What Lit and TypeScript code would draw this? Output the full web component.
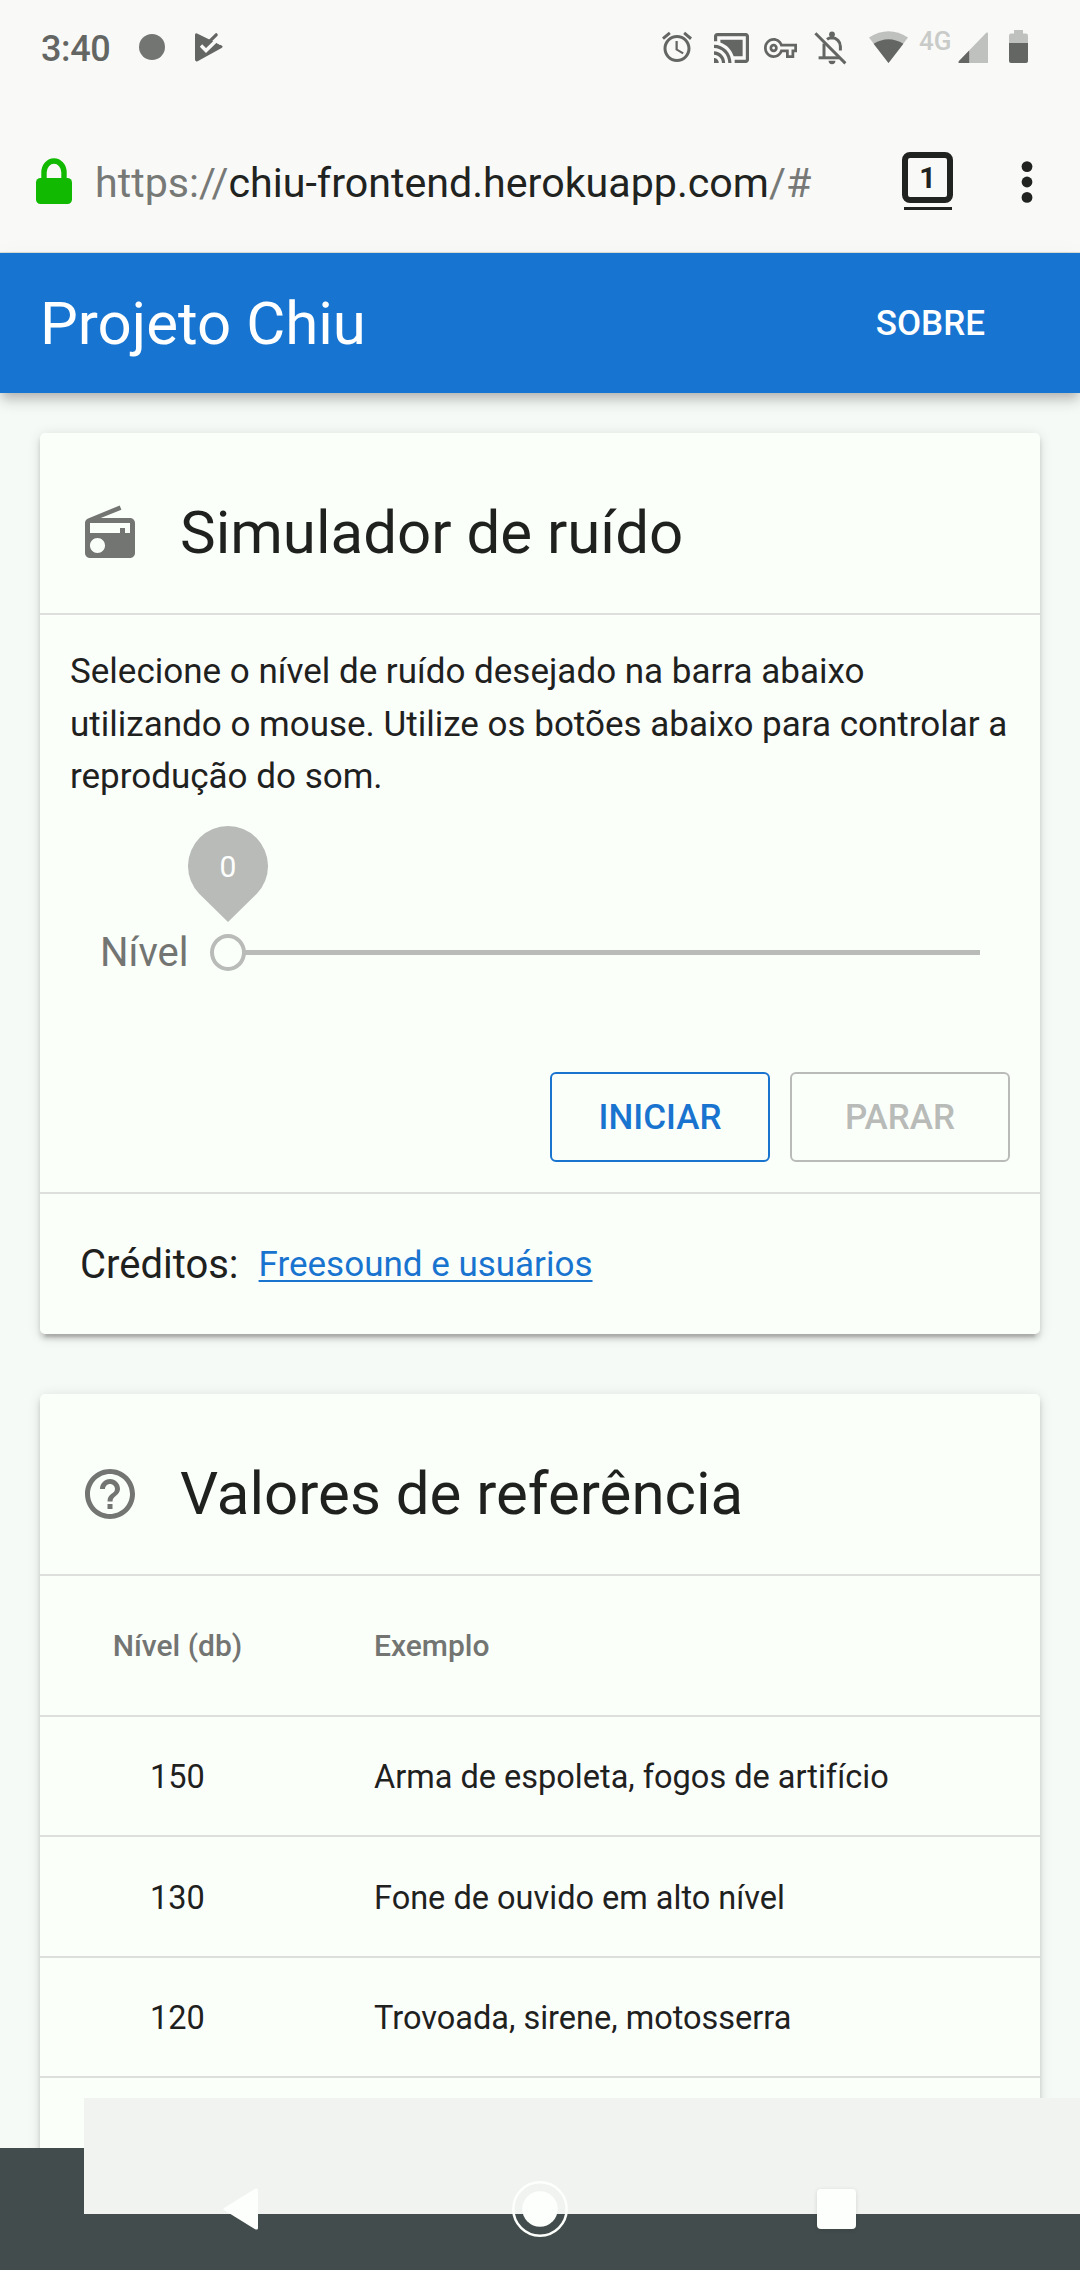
import { LitElement, html, css, svg } from "lit";
import { customElement, property } from "lit/decorators.js";

const ICONS: Record<string, { box: string; body: unknown }> = {
  playCheck: {
    box: "0 0 28 29",
    body: svg`<path d="M0 2Q0-.6 2.6.8L26.6 12.6Q28.6 13.8 26.6 15L2.6 28.2Q0 29 0 26.6z"/>
      <path d="M6 12.5L11 17.5L25.5 3.5" fill="none" stroke="#f9faf8" stroke-width="3.4"/>
      <path d="M11 11.8L21.2 1.8" fill="none" stroke="currentColor" stroke-width="3.2" stroke-linecap="round"/>
      <path d="M22 10L25 7V12z" fill="#f9faf8"/>`,
  },
  alarm: {
    box: "0 0 24 24",
    body: svg`<path d="M22 5.72l-4.6-3.86-1.29 1.53 4.6 3.86L22 5.72zM7.88 3.39L6.6 1.86 2 5.71l1.29 1.53 4.59-3.85zM12.5 8H11v6l4.75 2.85.75-1.23-4-2.37V8zM12 4c-4.97 0-9 4.03-9 9s4.02 9 9 9c4.97 0 9-4.03 9-9s-4.03-9-9-9zm0 16c-3.87 0-7-3.13-7-7s3.13-7 7-7 7 3.13 7 7-3.13 7-7 7z"/>`,
  },
  cast: {
    box: "1 3 22 18",
    body: svg`<path d="M1 18v3h3c0-1.66-1.34-3-3-3zm0-4v2c2.76 0 5 2.24 5 5h2c0-3.87-3.13-7-7-7zm18-7H5v1.63c3.96 1.28 7.09 4.41 8.37 8.37H19V7zM1 10v2c4.97 0 9 4.03 9 9h2c0-6.08-4.93-11-11-11zm20-7H3c-1.1 0-2 .9-2 2v3h2V5h18v14h-7v2h7c1.1 0 2-.9 2-2V5c0-1.1-.9-2-2-2z"/>`,
  },
  key: {
    box: "0 5 24 14",
    body: svg`<path d="M22 19h-6v-4h-2.68c-1.14 2.42-3.6 4-6.32 4-3.86 0-7-3.14-7-7s3.14-7 7-7c2.72 0 5.17 1.58 6.32 4H24v6h-2v4zm-4-2h2v-4h2v-2H11.94l-.23-.67C11.01 8.34 9.11 7 7 7c-2.76 0-5 2.24-5 5s2.24 5 5 5c2.11 0 4.01-1.34 4.71-3.33l.23-.67H18v4zM7 15c-1.65 0-3-1.35-3-3s1.35-3 3-3 3 1.35 3 3-1.35 3-3 3zm0-4c-.55 0-1 .45-1 1s.45 1 1 1 1-.45 1-1-.45-1-1-1z"/>`,
  },
  bellOff: {
    box: "0 0 34 35",
    body: svg`<g fill="none" stroke="currentColor" stroke-width="3">
      <path d="M2.4 3.2L32.4 33.4"/><path d="M11 13.5V27.6"/><path d="M5.6 27.8H26.5"/>
      <path d="M14 9.4Q16 7.8 19 7.8A8.6 8.6 0 0 1 27.4 16.4V20.6"/></g>
      <circle cx="19" cy="4.4" r="2.9"/><path d="M15.6 30.8h6.8a3.4 3.4 0 0 1-6.8 0z"/>`,
  },
  wifi: {
    box: "0 0 39 32",
    body: svg`<path d="M0 6.6Q19.5-6 39 6.6L19.5 32z" fill="#bfc1bf"/><path d="M4.6 12.8Q19.5 3.6 34.4 12.8L19.5 32z"/>`,
  },
  signal: {
    box: "0 0 30 31",
    body: svg`<path d="M28.5.5Q30 0 30 1.5V31H2Q-.5 31 1 29z" fill="#bfc1bf"/><path d="M11.2 18.6V31H2Q-.5 31 1 29z"/>`,
  },
  battery: {
    box: "0 0 19 33",
    body: svg`<path d="M0 13V6Q0 3.6 2 3.6H5V0H14V3.6H17Q19 3.6 19 6V13z" fill="#bfc1bf"/><path d="M0 13H19V31Q19 33 17 33H2Q0 33 0 31z"/>`,
  },
  lock: {
    box: "0 0 36 46",
    body: svg`<path d="M8 24V14.5a10 11.5 0 0 1 20 0V24" fill="none" stroke="currentColor" stroke-width="5.4"/><rect y="20" width="36" height="26" rx="4.5"/>`,
  },
  more: {
    box: "0 0 12 42",
    body: svg`<circle cx="6" cy="5.6" r="5.4"/><circle cx="6" cy="21" r="5.4"/><circle cx="6" cy="36.4" r="5.4"/>`,
  },
  radio: {
    box: "0 0 24 24",
    body: svg`<path d="M3.24 6.15C2.51 6.43 2 7.17 2 8v12c0 1.1.89 2 2 2h16c1.11 0 2-.9 2-2V8c0-1.11-.89-2-2-2H8.3l8.26-3.34L15.88 1 3.24 6.15zM7 20c-1.66 0-3-1.34-3-3s1.34-3 3-3 3 1.34 3 3-1.34 3-3 3zm13-8h-2v-2h-2v2H4V8h16v4z"/>`,
  },
  help: {
    box: "0 0 24 24",
    body: svg`<path d="M11 18h2v-2h-2v2zm1-16C6.48 2 2 6.48 2 12s4.48 10 10 10 10-4.48 10-10S17.52 2 12 2zm0 18c-4.41 0-8-3.59-8-8s3.59-8 8-8 8 3.59 8 8-3.59 8-8 8zm0-14c-2.21 0-4 1.79-4 4h2c0-1.1.9-2 2-2s2 .9 2 2c0 2-3 1.75-3 5h2c0-2.25 3-2.5 3-5 0-2.21-1.79-4-4-4z"/>`,
  },
  back: { box: "0 0 36 42", body: svg`<path d="M1 20Q0 21 1 22L33 41.2Q36 42.4 36 40V2Q36-.4 33 .8z"/>` },
  home: {
    box: "0 0 60 60",
    body: svg`<circle cx="30" cy="30" r="27.6" fill="none" stroke="currentColor" stroke-width="2.6"/><circle cx="30" cy="30" r="18.4"/>`,
  },
  recents: { box: "0 0 39 40", body: svg`<rect width="39" height="40" rx="4"/>` },
};

@customElement("ui-icon")
export class UiIcon extends LitElement {
  @property() name = "";
  static styles = css`
    :host { display: block; flex: none; }
    svg { display: block; width: 100%; height: 100%; overflow: visible; fill: currentColor; }
  `;
  render() {
    const icon = ICONS[this.name];
    return icon ? html`<svg viewBox=${icon.box} preserveAspectRatio="none">${icon.body}</svg>` : null;
  }
}

@customElement("status-bar")
export class StatusBar extends LitElement {
  static styles = css`
    :host { display: flex; align-items: flex-start; height: 96px; box-sizing: border-box; padding: 30px 52px 0 41px; color: #646664; }
    .time { font-size: 36px; font-weight: 500; line-height: 42px; margin-top: -2px; letter-spacing: -0.4px; width: 98px; }
    .dot { width: 26px; height: 26px; border-radius: 50%; background: #737573; margin-top: 4px; }
    .play { width: 28px; height: 29px; margin: 3px 0 0 30px; }
    .spacer { flex: 1; }
    .alarm { width: 36px; height: 36px; margin-top: -1px; }
    .cast { width: 35px; height: 30px; margin: 3px 0 0 19px; }
    .key { width: 33px; height: 20px; margin: 8px 0 0 15px; }
    .bell { width: 34px; height: 35px; margin-left: 16px; }
    .wifi { width: 39px; height: 32px; margin: 1px 0 0 22px; }
    .net { width: 39px; margin-left: 11px; font-size: 26px; font-weight: 500; line-height: 22px; color: #c9cbc9; }
    .signal { width: 30px; height: 31px; margin-top: 2px; }
    .battery { width: 19px; height: 33px; margin-left: 21px; }
  `;
  render() {
    return html`
      <span class="time">3:40</span><span class="dot"></span>
      <ui-icon class="play" name="playCheck"></ui-icon>
      <span class="spacer"></span>
      <ui-icon class="alarm" name="alarm"></ui-icon>
      <ui-icon class="cast" name="cast"></ui-icon>
      <ui-icon class="key" name="key"></ui-icon>
      <ui-icon class="bell" name="bellOff"></ui-icon>
      <ui-icon class="wifi" name="wifi"></ui-icon>
      <span class="net">4G</span>
      <ui-icon class="signal" name="signal"></ui-icon>
      <ui-icon class="battery" name="battery"></ui-icon>
    `;
  }
}

@customElement("address-bar")
export class AddressBar extends LitElement {
  static styles = css`
    :host { display: flex; align-items: flex-start; height: 157px; box-sizing: border-box; padding: 56px 47px 0 36px;
      border-bottom: 1px solid #dcded8; color: #212321; }
    .lock { width: 36px; height: 46px; margin-top: 6px; color: #11b900; }
    .url { margin-left: 23px; font-size: 41.2px; line-height: 50px; margin-top: 6px; white-space: nowrap; flex: 1; color: #777977; }
    .host { color: #212321; }
    .tabs { display: flex; flex-direction: column; align-items: center; gap: 4px; margin-right: 68px; }
    .count { width: 51px; height: 51px; box-sizing: border-box; border: 6px solid #212321; border-radius: 8px;
      font-size: 29px; font-weight: 700; line-height: 41px; text-align: center; }
    .shelf { width: 48px; height: 3px; background: #212321; }
    .more { width: 12px; height: 42px; margin-top: 9px; }
  `;
  render() {
    return html`
      <ui-icon class="lock" name="lock"></ui-icon>
      <span class="url">https://<span class="host">chiu-frontend.herokuapp.com</span>/#</span>
      <span class="tabs"><span class="count">1</span><span class="shelf"></span></span>
      <ui-icon class="more" name="more"></ui-icon>
    `;
  }
}

@customElement("card-title")
export class CardTitle extends LitElement {
  @property() icon = "";
  @property() heading = "";
  static styles = css`
    :host { display: flex; align-items: center; gap: 40px; height: 180px; box-sizing: border-box; padding: 20px 40px 0; }
    .icon { width: 60px; height: 60px; color: #737573; }
    .heading { margin: 0; font-size: 60px; font-weight: 400; line-height: 80px; white-space: nowrap; }
  `;
  render() {
    return html`<ui-icon class="icon" name=${this.icon}></ui-icon><h2 class="heading">${this.heading}</h2>`;
  }
}

@customElement("level-slider")
export class LevelSlider extends LitElement {
  @property({ type: Number }) value = 0;
  static styles = css`
    :host { display: flex; align-items: center; height: 60px; padding: 0 60px; }
    .label { width: 128px; font-size: 40px; line-height: 58px; padding-top: 2px; color: #737573; }
    .track { position: relative; flex: 1; height: 5px; background: #b8bbb8; }
    .thumb { position: absolute; left: -18px; top: -16px; width: 36px; height: 37px; box-sizing: border-box;
      border: 4px solid #b8bbb8; border-radius: 50%; background: #fbfffa; }
    .pin { position: absolute; left: -40px; top: -124px; width: 80px; height: 96px; }
    .drop { display: block; width: 80px; height: 96px; fill: #b8bbb8; }
    .value { position: absolute; inset: 0 0 16px; font-size: 30px; line-height: 81px; text-align: center; color: #fff; }
  `;
  render() {
    return html`
      <span class="label">Nível</span>
      <div class="track">
        <span class="thumb"></span>
        <span class="pin">
          <svg class="drop" viewBox="0 0 80 96"><path d="M40 96L11.2 67.8A40 40 0 1 1 68.8 67.8z" /></svg>
          <span class="value">${this.value}</span>
        </span>
      </div>
    `;
  }
}

const CARD = css`
  .card { background: #fbfffa; border-radius: 5px;
    box-shadow: 0 2.5px 12.5px rgba(0, 0, 0, 0.12), 0 5px 5px rgba(0, 0, 0, 0.14), 0 7.5px 2.5px -5px rgba(0, 0, 0, 0.14); }
  .rule { height: 2px; background: #dddfdd; }
`;

@customElement("simulator-card")
export class SimulatorCard extends LitElement {
  static styles = [CARD, css`
    :host { display: block; }
    .card { height: 901px; }
    .text { margin: 0; padding: 31px 30px 0; height: 156px; font-size: 35px; line-height: 52.5px; white-space: pre-line; }
    .slider { margin-top: 120px; }
    .actions { display: flex; justify-content: flex-end; gap: 20px; padding: 90px 30px 30px; }
    .btn { width: 220px; height: 90px; box-sizing: border-box; padding: 1px 0 0; border: 2px solid currentColor; border-radius: 6px;
      background: none; font: 500 35px/85px Roboto, sans-serif; text-transform: uppercase; color: #1974d0; }
    .off { color: #b8bbb8; }
    .credits { display: flex; align-items: center; height: 140px; padding: 0 40px; font-size: 40px; }
    .link { margin-left: 20px; font-size: 35px; color: #1974d0; text-decoration: underline;
      text-decoration-thickness: 2px; text-underline-offset: 4px; text-decoration-skip-ink: none; }
  `];
  render() {
    return html`
      <section class="card">
        <card-title icon="radio" heading="Simulador de ruído"></card-title>
        <div class="rule"></div>
        <p class="text">Selecione o nível de ruído desejado na barra abaixo
utilizando o mouse. Utilize os botões abaixo para controlar a
reprodução do som.</p>
        <level-slider class="slider" .value=${0}></level-slider>
        <div class="actions">
          <button class="btn">Iniciar</button>
          <button class="btn off" disabled>Parar</button>
        </div>
        <div class="rule"></div>
        <div class="credits"><span>Créditos:</span><a class="link">Freesound e usuários</a></div>
      </section>
    `;
  }
}

const LEVELS = [
  { level: 150, example: "Arma de espoleta, fogos de artifício" },
  { level: 130, example: "Fone de ouvido em alto nível" },
  { level: 120, example: "Trovoada, sirene, motosserra" },
];

@customElement("reference-card")
export class ReferenceCard extends LitElement {
  static styles = [CARD, css`
    :host { display: block; }
    .card { height: 960px; }
    .row { display: grid; grid-template-columns: 275px 1fr; column-gap: 59px; align-items: center; height: 120.4px;
      box-sizing: border-box; padding-top: 2px; border-bottom: 2px solid #dddfdd; font-size: 32.5px; }
    .head { height: 141px; padding-top: 0; font-size: 30px; font-weight: 500; color: #737573; }
    .level { text-align: center; }
  `];
  render() {
    return html`
      <section class="card">
        <card-title icon="help" heading="Valores de referência"></card-title>
        <div class="rule"></div>
        <div class="row head"><span class="level">Nível (db)</span><span>Exemplo</span></div>
        ${LEVELS.map((r) => html`<div class="row"><span class="level">${r.level}</span><span>${r.example}</span></div>`)}
      </section>
    `;
  }
}

@customElement("app-root")
export class AppRoot extends LitElement {
  static styles = css`
    :host { display: block; position: relative; width: 1080px; height: 2270px; overflow: hidden; background: #f6faf6;
      color: #1f211f; font-family: Roboto, sans-serif; }
    .chrome { background: #f9faf8; }
    .toolbar { position: relative; display: flex; align-items: center; justify-content: space-between; height: 140px; box-sizing: border-box;
      padding: 0 95px 0 40px; background: #1774d0; color: #fff;
      box-shadow: 0 5px 10px -2.5px rgba(0, 0, 0, 0.2), 0 10px 12.5px rgba(0, 0, 0, 0.1), 0 2.5px 25px rgba(0, 0, 0, 0.04); }
    .title { margin: 0; font-size: 60px; font-weight: 400; }
    .about { font-size: 35px; font-weight: 500; text-transform: uppercase; }
    .page { display: flex; flex-direction: column; gap: 60px; padding: 40px 40px 0; }
    .nav { position: absolute; left: 0; right: 0; bottom: 0; height: 122px; background: #434c4c; }
    .toast { position: absolute; left: 84px; right: 0; bottom: 56px; height: 116px; background: #f1f3f1; }
    .keys { position: absolute; left: 0; right: 0; bottom: 31px; height: 60px; display: flex; align-items: center; color: #fcfffc; }
    .back { width: 35px; height: 42px; margin-left: 223px; }
    .home { width: 58px; height: 58px; margin-left: 253px; }
    .recents { width: 39px; height: 40px; margin-left: 248px; filter: drop-shadow(0 1px 2px rgba(0, 0, 0, 0.12)); }
  `;
  render() {
    return html`
      <div class="chrome"><status-bar></status-bar><address-bar></address-bar></div>
      <header class="toolbar"><h1 class="title">Projeto Chiu</h1><span class="about">Sobre</span></header>
      <main class="page">
        <simulator-card></simulator-card>
        <reference-card></reference-card>
      </main>
      <div class="nav"></div>
      <div class="toast"></div>
      <div class="keys">
        <ui-icon class="back" name="back"></ui-icon>
        <ui-icon class="home" name="home"></ui-icon>
        <ui-icon class="recents" name="recents"></ui-icon>
      </div>
    `;
  }
}
